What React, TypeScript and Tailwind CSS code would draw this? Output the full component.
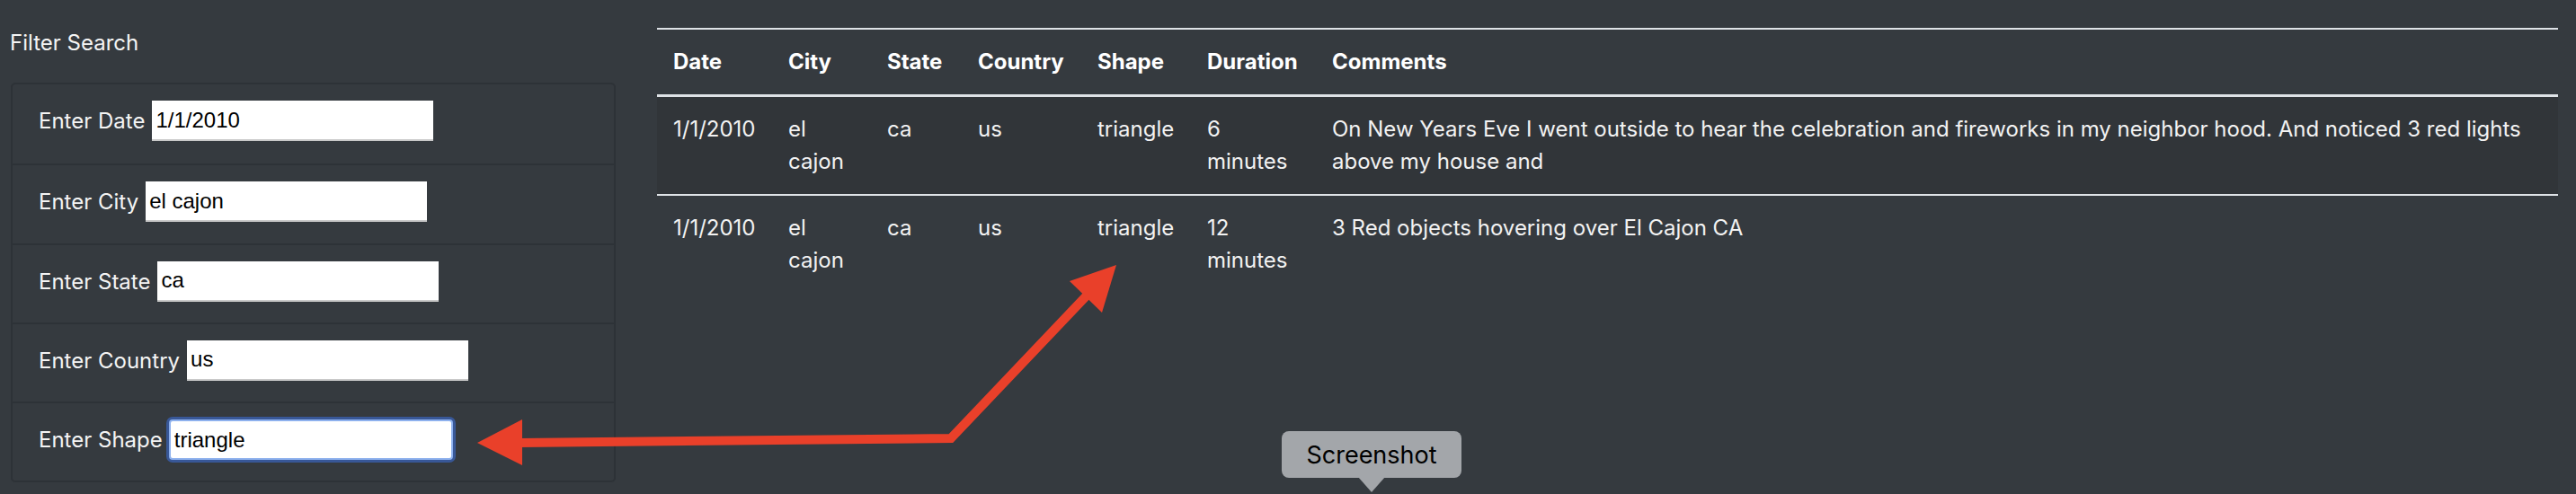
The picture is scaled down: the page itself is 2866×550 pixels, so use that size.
import React from "react";

const FONT = { fontFamily: "Inter, 'Noto Sans', sans-serif" };

const filters = [
  { label: "Enter Date", value: "1/1/2010", focused: false },
  { label: "Enter City", value: "el cajon", focused: false },
  { label: "Enter State", value: "ca", focused: false },
  { label: "Enter Country", value: "us", focused: false },
  { label: "Enter Shape", value: "triangle", focused: true },
];

const rows = [
  {
    date: "1/1/2010",
    city: "el cajon",
    state: "ca",
    country: "us",
    shape: "triangle",
    duration: "6 minutes",
    comments:
      "On New Years Eve I went outside to hear the celebration and fireworks in my neighbor hood. And noticed 3 red lights above my house and",
  },
  {
    date: "1/1/2010",
    city: "el cajon",
    state: "ca",
    country: "us",
    shape: "triangle",
    duration: "12 minutes",
    comments: "3 Red objects hovering over El Cajon CA",
  },
];

export default function App() {
  return (
    <div
      className="relative w-[2866px] h-[550px] overflow-hidden bg-[#353a3f] text-white"
      style={FONT}
    >
      <div className="flex items-start">
        {/* Left filter column */}
        <div className="w-[685px] shrink-0 pl-[12px]">
          <div className="pt-[30px] -ml-px text-[24px] leading-[36px] text-[#f4f4f4]">
            Filter Search
          </div>
          <div className="mt-[26px] border-2 border-[#2d3237] rounded-[5px]">
            {filters.map((f, i) => (
              <div
                key={f.label}
                className={
                  "h-[88.25px] flex items-start pt-[18px] pl-[29px] gap-[8px] " +
                  (i > 0 ? "border-t-2 border-[#2d3237]" : "")
                }
              >
                <span className="text-[24px] leading-[45px] text-[#f4f4f4] whitespace-nowrap">
                  {f.label}
                </span>
                {f.focused ? (
                  <input
                    readOnly
                    value={f.value}
                    className="-ml-px w-[316px] h-[45px] bg-white text-black text-[24px] px-[4px] rounded-[4px] border-2 border-[#8eb1ee] shadow-[0_0_0_3px_#385797] outline-none"
                    style={{ fontFamily: "'Liberation Sans', Arial, sans-serif" }}
                  />
                ) : (
                  <input
                    readOnly
                    value={f.value}
                    className="w-[313px] h-[45px] bg-white text-black text-[24px] px-[4px] border-0 border-b-2 border-[#c9c9c9] outline-none"
                    style={{ fontFamily: "'Liberation Sans', Arial, sans-serif" }}
                  />
                )}
              </div>
            ))}
          </div>
        </div>

        {/* Table */}
        <div className="ml-[46px] w-[2115px] pt-[31px]">
          <table className="table-fixed w-full border-collapse border-t-2 border-[#dee2e6] text-[24px] leading-[36px]">
            <colgroup>
              <col className="w-[128px]" />
              <col className="w-[110px]" />
              <col className="w-[101px]" />
              <col className="w-[133px]" />
              <col className="w-[122px]" />
              <col className="w-[139px]" />
              <col />
            </colgroup>
            <thead>
              <tr className="border-b-[3px] border-[#dee2e6]">
                {["Date", "City", "State", "Country", "Shape", "Duration", "Comments"].map(
                  (h) => (
                    <th
                      key={h}
                      className="text-left font-bold px-[18px] py-[18px] align-top whitespace-nowrap text-white"
                    >
                      {h}
                    </th>
                  )
                )}
              </tr>
            </thead>
            <tbody className="text-[#f2f2f2]">
              {rows.map((r, i) => (
                <tr
                  key={i}
                  className={i === 0 ? "bg-[#313539] border-b-2 border-[#dee2e6]" : ""}
                >
                  <td className="px-[18px] py-[18px] align-top whitespace-nowrap">{r.date}</td>
                  <td className="px-[18px] py-[18px] align-top">{r.city}</td>
                  <td className="px-[18px] py-[18px] align-top whitespace-nowrap">{r.state}</td>
                  <td className="px-[18px] py-[18px] align-top whitespace-nowrap">{r.country}</td>
                  <td className="px-[18px] py-[18px] align-top whitespace-nowrap">{r.shape}</td>
                  <td className="px-[18px] py-[18px] align-top">{r.duration}</td>
                  <td className="pl-[18px] pr-[14px] py-[18px] align-top">{r.comments}</td>
                </tr>
              ))}
            </tbody>
          </table>
        </div>
      </div>

      {/* Red annotation arrows */}
      <svg
        className="absolute left-0 top-0 pointer-events-none"
        width="2866"
        height="550"
        viewBox="0 0 2866 550"
      >
        <polyline
          points="578,493 1058,488 1210,328"
          fill="none"
          stroke="#e9402a"
          strokeWidth="10"
          strokeLinejoin="miter"
        />
        <polygon points="531,493 581,467 581,518" fill="#e9402a" />
        <polygon points="1242,295 1190,313 1226,348" fill="#e9402a" />
      </svg>

      {/* Screenshot tooltip */}
      <div className="absolute left-[1426px] top-[480px] w-[200px] h-[52px] rounded-[8px] bg-[#a3a6aa] flex items-center justify-center">
        <span className="text-[27px] text-black leading-none">Screenshot</span>
      </div>
      <div className="absolute left-[1511px] top-[531px] w-0 h-0 border-l-[15px] border-r-[15px] border-t-[17px] border-l-transparent border-r-transparent border-t-[#a3a6aa]" />
    </div>
  );
}
